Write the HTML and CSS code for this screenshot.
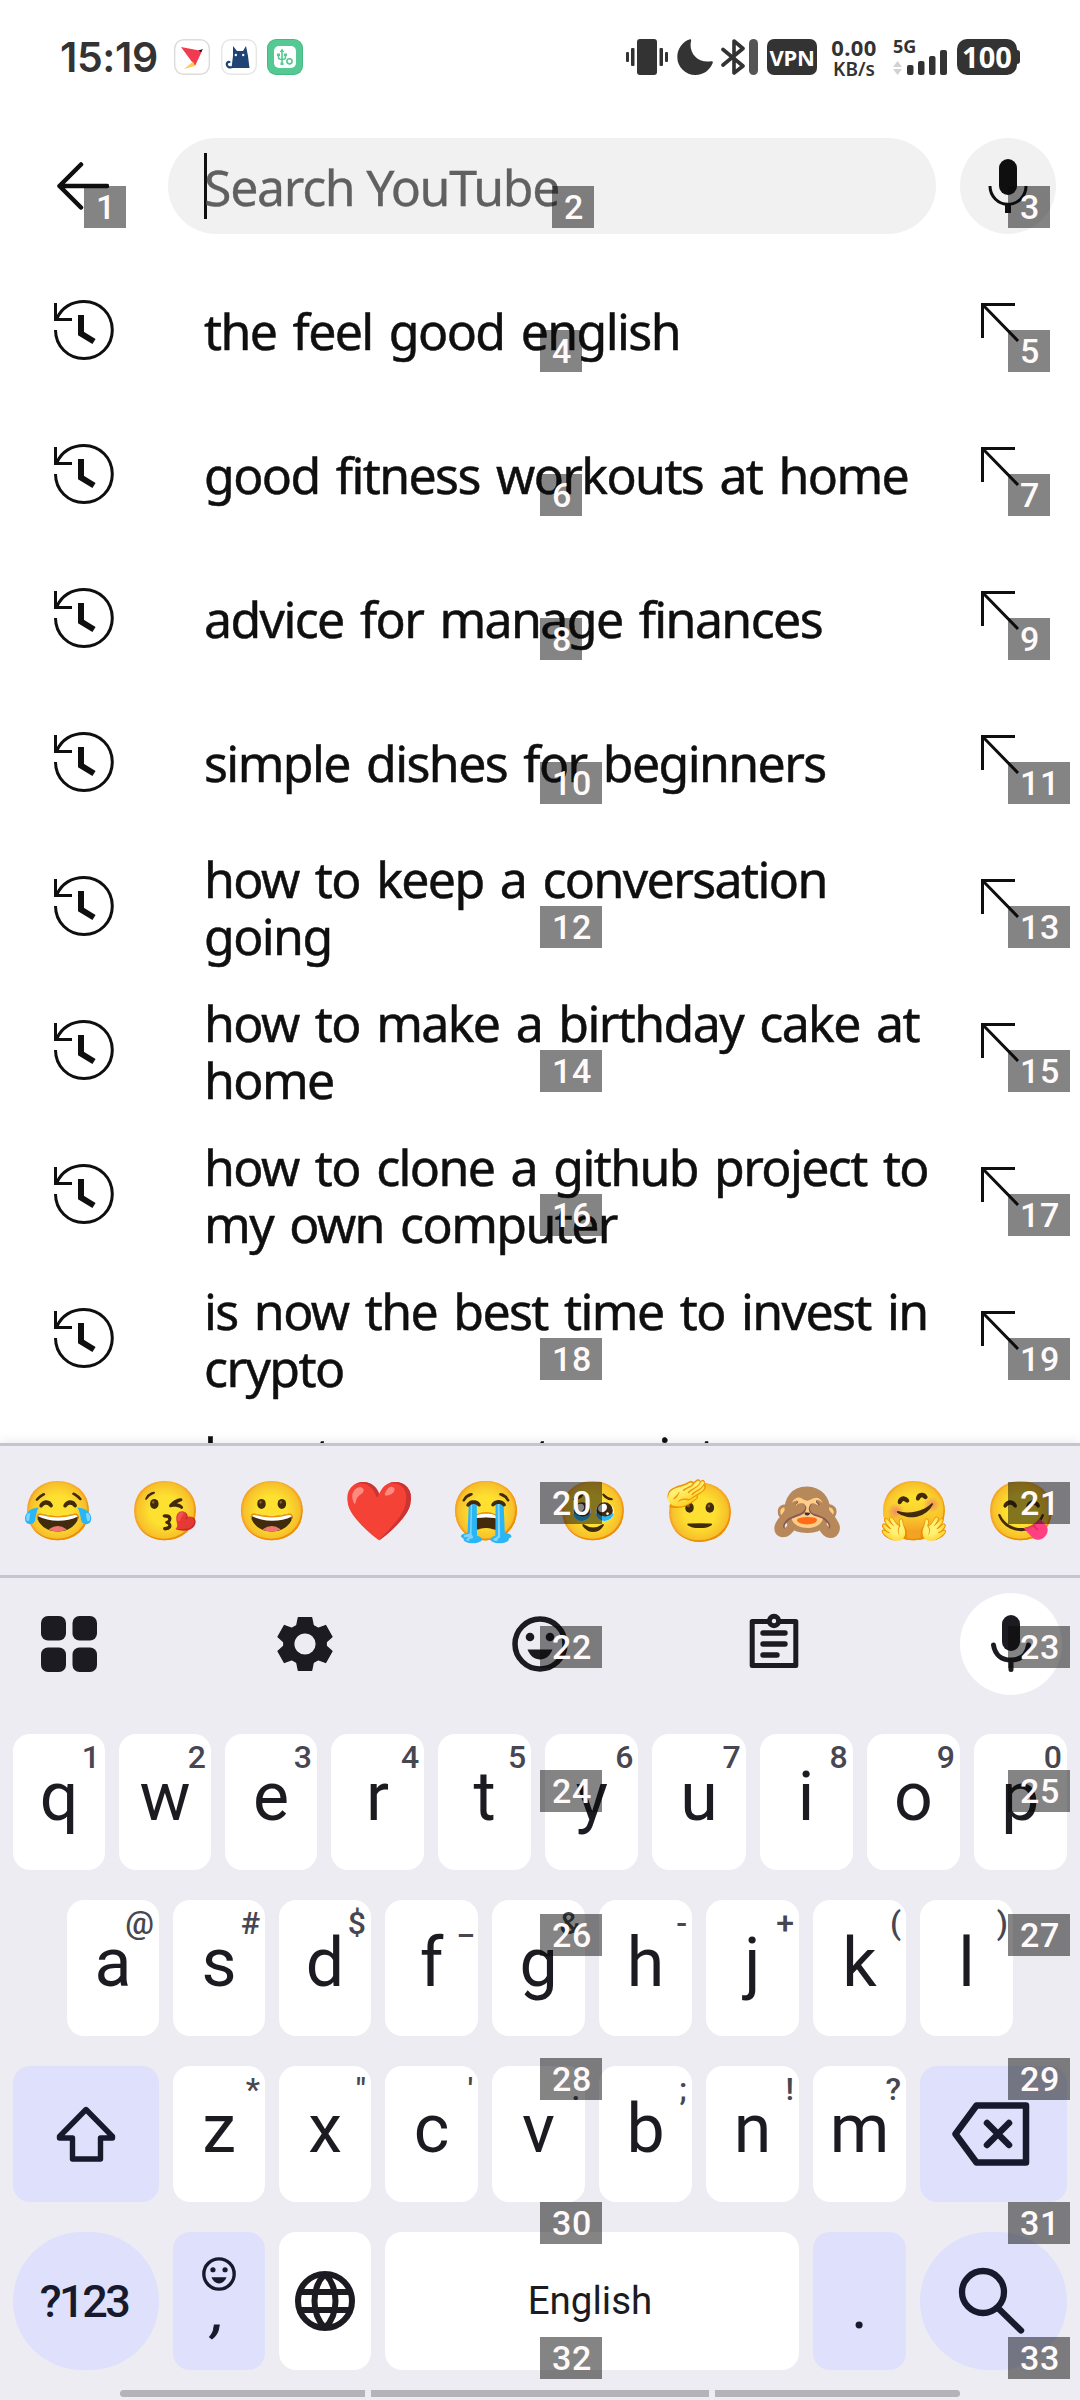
FILE: index.html
```html
<!DOCTYPE html>
<html lang="en">
<head>
<meta charset="utf-8">
<title>Search YouTube</title>
<link rel="stylesheet" href="styles.css">
</head>
<body>
<svg class="defs" aria-hidden="true">
  <symbol id="history" viewBox="0 0 64 64"><g fill="none" stroke="#0f0f0f"><path stroke-width="3" d="M3.5 32C3.5 48 16 60.500 32 60.500S60.300 48 60.300 32 48 3.500 32 3.500C20 3.500 9.500 9.500 5 20.500"/><path stroke-width="3" d="M3.500 5V21.500H20"/><path stroke-width="6" d="M29 17V35.500L42 43.500"/></g></symbol>
  <symbol id="insert" viewBox="0 0 42 42"><path fill="none" stroke="#0f0f0f" stroke-width="3" d="M2.500 36V2.500H35M2.500 2.500L38 39"/></symbol>
  <symbol id="smile" viewBox="0 0 56 56"><circle cx="28" cy="28" r="25" fill="none" stroke="currentColor" stroke-width="5.500"/><circle cx="18" cy="21" r="4.300" fill="currentColor"/><circle cx="38" cy="21" r="4.300" fill="currentColor"/><path fill="currentColor" d="M15.500 33.500H40.500C38 40 33.500 43.500 28 43.500S18 40 15.500 33.500Z"/></symbol>
</svg>

<header class="status">
  <span class="clock">15:19</span>
  <div class="apps">
    <svg width="36" height="36" viewBox="0 0 36 36"><rect x=".7" y=".7" width="34.600" height="34.600" rx="9" fill="#fff" stroke="#dcdcdc" stroke-width="1.400"/><path fill="#f23a50" d="M7 8L28 12 21 27Z"/><path fill="#ffcb57" d="M10 30L19 22.500 21 27Z"/><path fill="#111" d="M24.500 11.500L29 10 27 13Z"/></svg>
    <svg width="36" height="36" viewBox="0 0 36 36"><rect x=".7" y=".7" width="34.600" height="34.600" rx="9" fill="#fff" stroke="#e6e6e6" stroke-width="1.400"/><path fill="#1f4374" d="M12 7L16 12H22L25 7 27 17 28.500 29H10.500L12 17Z"/><path fill="none" stroke="#1f4374" stroke-width="2.200" stroke-linecap="round" d="M12 28C5 30 4 22.500 8.500 23"/><circle cx="14.800" cy="16" r="1.200" fill="#fff"/><circle cx="22.200" cy="16" r="1.200" fill="#fff"/></svg>
    <svg width="36" height="36" viewBox="0 0 36 36"><rect width="36" height="36" rx="9" fill="#46b983"/><rect x="1" y="1" width="34" height="34" rx="8" fill="#54c993"/><rect x="7" y="7" width="22" height="22" rx="5" fill="#fff"/><g fill="none" stroke="#54c993" stroke-width="1.600"><path d="M15 12V24.500M11.500 16V18.500Q11.500 20.500 15 20.500 18.500 20.500 18.500 18.500V16"/><circle cx="22.500" cy="22.300" r="2.600"/></g><path fill="#54c993" d="M15 9.500L17.300 13H12.700ZM13.500 23.500H16.500V26H13.500ZM10 14.500H13V17H10ZM17 14.500H20V17H17Z"/></svg>
  </div>
  <div class="indicators">
    <svg class="i-vib" width="42" height="36" viewBox="0 0 42 36" fill="#333"><rect x="11" width="20" height="36" rx="3"/><rect y="13" width="3" height="10" rx="1"/><rect x="5" y="9" width="3.500" height="18" rx="1"/><rect x="33.500" y="9" width="3.500" height="18" rx="1"/><rect x="39" y="13" width="3" height="10" rx="1"/></svg>
    <svg class="i-moon" width="36" height="36" viewBox="0 0 36 36" fill="#333"><path d="M13 .3C14.300 0 14.300 .8 14 2.500 11.500 13 20 24.500 34 22.300 35.600 22 36.100 22.500 35.700 24 33 31 26.500 36 18.500 36A18 18 0 0 1 .3 18C.3 10 5.500 2.500 13 .3Z"/></svg>
    <svg class="i-bt" width="38" height="36" viewBox="0 0 38 36"><path fill="none" stroke="#333" stroke-width="3.600" stroke-linejoin="round" stroke-linecap="round" d="M2 10.500L22 27 13 34V2L22 9.500 2 26"/><rect x="28" width="9" height="36" rx="4.500" fill="#555"/></svg>
    <span class="vpn">VPN</span>
    <div class="speed"><span class="rate">0.00</span><span class="unit">KB/s</span></div>
    <div class="cell"><span class="gen">5G</span>
      <svg width="55" height="27" viewBox="0 0 55 27"><path fill="#d2d2d2" d="M0 19H9L4.500 13ZM0 21H9L4.500 27Z"/><g fill="#333"><rect x="14" y="17" width="6.500" height="10" rx="2"/><rect x="25" y="13" width="6.500" height="14" rx="2"/><rect x="36" y="8" width="6.500" height="19" rx="2"/><rect x="47" y="2" width="7" height="25" rx="2"/></g></svg>
    </div>
    <span class="battery">100</span><i class="nub"></i>
  </div>
</header>

<div class="searchbar">
  <svg class="back" width="52" height="50" viewBox="0 0 52 50"><path fill="none" stroke="#0f0f0f" stroke-width="4.500" stroke-linecap="round" stroke-linejoin="round" d="M24 3.500L2.500 25 24 46.500M2.500 25H50"/></svg>
  <div class="field"><i class="caret"></i><span>Search YouTube</span></div>
  <div class="voice"><svg width="40" height="56" viewBox="0 0 40 56"><rect x="11" y="1" width="18" height="36" rx="9" fill="#0f0f0f"/><path fill="none" stroke="#0f0f0f" stroke-width="3" d="M2 28A18 18.300 0 0 0 38 28"/><path fill="#0f0f0f" d="M17 46H23V55H17Z"/></svg></div>
</div>

<main class="results">
  <div class="row"><svg class="hist"><use href="#history"/></svg><p>the feel good english</p><svg class="ins"><use href="#insert"/></svg></div>
  <div class="row"><svg class="hist"><use href="#history"/></svg><p>good fitness workouts at home</p><svg class="ins"><use href="#insert"/></svg></div>
  <div class="row"><svg class="hist"><use href="#history"/></svg><p>advice for manage finances</p><svg class="ins"><use href="#insert"/></svg></div>
  <div class="row"><svg class="hist"><use href="#history"/></svg><p>simple dishes for beginners</p><svg class="ins"><use href="#insert"/></svg></div>
  <div class="row"><svg class="hist"><use href="#history"/></svg><p>how to keep a conversation<br>going</p><svg class="ins"><use href="#insert"/></svg></div>
  <div class="row"><svg class="hist"><use href="#history"/></svg><p>how to make a birthday cake at<br>home</p><svg class="ins"><use href="#insert"/></svg></div>
  <div class="row"><svg class="hist"><use href="#history"/></svg><p>how to clone a github project to<br>my own computer</p><svg class="ins"><use href="#insert"/></svg></div>
  <div class="row"><svg class="hist"><use href="#history"/></svg><p>is now the best time to invest in<br>crypto</p><svg class="ins"><use href="#insert"/></svg></div>
  <div class="row"><span class="hist"></span><p>how to connect a printer<br>&nbsp;</p></div>
</main>

<section class="keyboard">
  <div class="emojis"><span>😂</span><span>😘</span><span>😀</span><span>❤️</span><span>😭</span><span>🥹</span><span>🫡</span><span>🙈</span><span>🤗</span><span>😋</span></div>
  <div class="tools">
    <span><svg width="56" height="56" viewBox="0 0 56 56" fill="#1b1b21"><rect width="25" height="24.500" rx="7"/><rect x="31.500" width="24.500" height="24.500" rx="7"/><rect y="31.500" width="25" height="24.500" rx="7"/><rect x="31.500" y="31.500" width="24.500" height="24.500" rx="7"/></svg></span>
    <span><svg width="66" height="66" viewBox="0 0 24 24"><path fill="#1b1b21" fill-rule="evenodd" stroke="#1b1b21" stroke-width=".5" stroke-linejoin="round" d="M9.600 2.400H14.400L15 5.300 16.800 6.300 19.500 5.300 21.800 9.400 19.700 11.300V12.700L21.800 14.600 19.500 18.700 16.800 17.700 15 18.700 14.400 21.600H9.600L9 18.700 7.200 17.700 4.500 18.700 2.200 14.600 4.300 12.700V11.300L2.200 9.400 4.500 5.300 7.200 6.300 9 5.300ZM12 7.900A4.100 4.100 0 1 0 12 16.100 4.100 4.100 0 1 0 12 7.900Z"/></svg></span>
    <span><svg width="56" height="56"><use href="#smile"/></svg></span>
    <span class="clip"><svg width="50" height="56" viewBox="0 0 50 56"><path fill="none" stroke="#1b1b21" stroke-width="5" stroke-linejoin="round" d="M3.200 8.500H46.800V52.500H3.200Z"/><circle cx="25" cy="8" r="4.700" fill="#edecf3" stroke="#1b1b21" stroke-width="5"/><path stroke="#1b1b21" stroke-width="5.400" stroke-linecap="round" d="M14 20H36M14 31H36M14 42H28"/></svg></span>
    <span class="mic"><svg width="44" height="60" viewBox="0 0 44 60"><rect x="13" y="1" width="18" height="36" rx="9" fill="#1b1b21"/><path fill="none" stroke="#1b1b21" stroke-width="5" stroke-linecap="round" d="M4.500 31C6 41 13 46 22 46S38 41 39.500 31M22 47V55.500"/></svg></span>
  </div>
  <div class="keys">
    <div class="krow"><b class="n">q<sup>1</sup></b><b class="n">w<sup>2</sup></b><b class="n">e<sup>3</sup></b><b>r<sup>4</sup></b><b>t<sup>5</sup></b><b>y<sup>6</sup></b><b>u<sup>7</sup></b><b>i<sup>8</sup></b><b>o<sup>9</sup></b><b>p<sup>0</sup></b></div>
    <div class="krow home"><b class="n">a<sup>@</sup></b><b class="n">s<sup>#</sup></b><b class="n">d<sup>$</sup></b><b>f<sup>_</sup></b><b>g<sup>&amp;</sup></b><b>h<sup>-</sup></b><b>j<sup>+</sup></b><b>k<sup>(</sup></b><b>l<sup>)</sup></b></div>
    <div class="krow">
      <b class="fn wide"><svg width="62" height="62" viewBox="0 0 62 62"><path fill="none" stroke="#171a2c" stroke-width="5.400" stroke-linejoin="round" d="M31 6.500L4.500 33.500V35H17.500V56H45.500V35H57.500V33.500Z"/></svg></b>
      <b class="n">z<sup>*</sup></b><b class="n">x<sup>"</sup></b><b>c<sup>'</sup></b><b>v<sup>:</sup></b><b>b<sup>;</sup></b><b>n<sup>!</sup></b><b>m<sup>?</sup></b>
      <b class="fn wide del"><svg width="78" height="64" viewBox="0 0 78 64"><g fill="none" stroke="#171a2c" stroke-width="6.500" stroke-linejoin="round" stroke-linecap="round"><path d="M24.500 3.500H74V60.500H24.500L3.500 32Z"/><path d="M35 21L57 43M57 21L35 43"/></g></svg></b>
    </div>
    <div class="krow last">
      <b class="fn wide round sym">?123</b>
      <b class="n fn comma"><svg width="34" height="34"><use href="#smile"/></svg><span>,</span></b>
      <b class="n globe"><svg width="60" height="60" viewBox="0 0 60 60"><g fill="none" stroke="#1b1b21" stroke-width="6"><circle cx="30" cy="30" r="27"/><path d="M3 21H57M3 39H57M30 3C16 17 16 43 30 57M30 3C44 17 44 43 30 57"/></g></svg></b>
      <b class="space">English</b>
      <b class="fn dot">.</b>
      <b class="fn wide round go"><svg width="68" height="70" viewBox="0 0 68 70"><g fill="none" stroke="#171a2c" stroke-width="6.300" stroke-linecap="round"><circle cx="26" cy="26" r="21"/><path d="M42 43L64 64.500"/></g></svg></b>
    </div>
  </div>
  <div class="nav"><i></i><i></i><i></i></div>
</section>

<div class="tags">
  <span style="left:84px;top:186px">1</span><span style="left:552px;top:186px">2</span><span style="left:1008px;top:186px">3</span>
  <span style="left:540px;top:330px">4</span><span style="left:1008px;top:330px">5</span>
  <span style="left:540px;top:474px">6</span><span style="left:1008px;top:474px">7</span>
  <span style="left:540px;top:618px">8</span><span style="left:1008px;top:618px">9</span>
  <span style="left:540px;top:762px">10</span><span style="left:1008px;top:762px">11</span>
  <span style="left:540px;top:906px">12</span><span style="left:1008px;top:906px">13</span>
  <span style="left:540px;top:1050px">14</span><span style="left:1008px;top:1050px">15</span>
  <span style="left:540px;top:1194px">16</span><span style="left:1008px;top:1194px">17</span>
  <span style="left:540px;top:1338px">18</span><span style="left:1008px;top:1338px">19</span>
  <span style="left:540px;top:1482px">20</span><span style="left:1008px;top:1482px">21</span>
  <span style="left:540px;top:1626px">22</span><span style="left:1008px;top:1626px">23</span>
  <span style="left:540px;top:1770px">24</span><span style="left:1008px;top:1770px">25</span>
  <span style="left:540px;top:1914px">26</span><span style="left:1008px;top:1914px">27</span>
  <span style="left:540px;top:2058px">28</span><span style="left:1008px;top:2058px">29</span>
  <span style="left:540px;top:2202px">30</span><span style="left:1008px;top:2202px">31</span>
  <span style="left:540px;top:2337px">32</span><span style="left:1008px;top:2337px">33</span>
</div>
</body>
</html>
```
FILE: styles.css
```css
* { box-sizing: border-box; }
body {
  margin: 0;
  width: 1080px;
  height: 2400px;
  position: relative;
  overflow: hidden;
  display: flex;
  flex-direction: column;
  background: #fff;
  color: #0f0f0f;
  font-family: "Noto Sans", sans-serif;
}
svg { display: block; flex: none; }
.defs { position: absolute; width: 0; height: 0; }

/* status bar */
.status { height: 138px; padding: 39px 60px 0 60px; display: flex; color: #333; }
.clock { width: 114px; height: 36px; font: 600 41px/36px Inter, sans-serif; letter-spacing: -.4px; }
.apps { display: flex; gap: 10.500px; }
.indicators { margin-left: auto; display: flex; height: 36px; }
.i-moon { margin-left: 9px; }
.i-bt { margin-left: 8px; }
.vpn {
  margin-left: 8px; width: 50px; height: 36px; border-radius: 7px; background: #333; color: #fff;
  font: 700 22px/36px "Noto Sans", sans-serif; text-align: center; letter-spacing: -.3px;
}
.speed { margin-left: 12px; width: 50px; display: flex; flex-direction: column; align-items: center; font-weight: 700; }
.rate { font-size: 22px; line-height: 17px; letter-spacing: .4px; }
.unit { font-size: 19px; line-height: 19px; margin-top: 3.500px; font-weight: 600; }
.cell { margin-left: 14px; width: 55px; height: 36px; display: flex; flex-direction: column; justify-content: space-between; }
.cell svg { margin-top: -5px; }
.gen { font-size: 18px; line-height: 14px; font-weight: 700; }
.battery {
  margin-left: 9px; width: 60px; height: 36px; border-radius: 10px; background: #333; color: #fff;
  font: 700 29px/36px "Noto Sans", sans-serif; text-align: center;
}
.nub { width: 3px; height: 14px; margin-top: 11px; border-radius: 0 3px 3px 0; background: #333; }

/* search bar */
.searchbar { height: 120px; padding: 0 24px 24px 57px; display: flex; align-items: center; }
.field {
  margin-left: 59px; width: 768px; height: 96px; padding-left: 36px; border-radius: 48px; background: #f1f1f1;
  display: flex; align-items: center; color: #606060; font-size: 50px; letter-spacing: -1.300px;
}
.field span { padding-top: 2px; -webkit-text-stroke: .3px #606060; }
.caret { width: 3px; height: 66px; margin-right: -3px; background: #0f0f0f; }
.voice { margin-left: auto; width: 96px; height: 96px; border-radius: 50%; background: #f1f1f1; display: flex; align-items: center; justify-content: center; }

/* suggestions */
.results { height: 1185px; overflow: hidden; }
.row { height: 144px; padding-left: 52px; display: flex; align-items: center; }
.hist { width: 64px; height: 64px; flex: none; }
.row p {
  margin: 0 0 0 88px; padding-top: 3px; width: 776px; flex: none; white-space: nowrap;
  font-size: 50px; line-height: 57px; letter-spacing: -1.600px; word-spacing: 4.800px; -webkit-text-stroke: .5px #0f0f0f;
}
.ins { width: 42px; height: 42px; margin-top: -14px; }

/* keyboard */
.keyboard {
  position: relative; height: 957px; background: #edecf3; color: #1b1b21;
  font-family: Roboto, sans-serif; display: flex; flex-direction: column;
  box-shadow: 0 -2px 10px rgba(0, 0, 0, .08);
}
.emojis {
  height: 135px; padding: 0 6px 0 4px; display: grid; grid-template-columns: repeat(10, 1fr); align-items: center; justify-items: center;
  border-top: 3px solid #c6c4d0; border-bottom: 3px solid #c6c4d0; font-size: 58px; line-height: 70px;
}
.tools { height: 156px; padding: 15px 18px 39px; display: flex; justify-content: space-between; }
.tools span { width: 102px; height: 102px; display: flex; align-items: center; justify-content: center; }
.tools .clip { padding: 0 3px 7px 0; }
.tools .mic { border-radius: 50%; background: #fff; }
.keys { padding: 0 13px; display: flex; flex-direction: column; gap: 30px; }
.krow { height: 136px; display: flex; gap: 14px; }
.krow.home { padding: 0 54px; }
.krow.last { height: 138px; }
.krow b {
  position: relative; flex: 1 1 0; min-width: 0; padding-bottom: 10px; border-radius: 17px; background: #fff;
  display: flex; align-items: center; justify-content: center; font-weight: 400; font-size: 68px; line-height: 1;
}
.krow .n { flex: 0 0 92px; }
.krow sup { position: absolute; top: 7px; right: 5px; font-size: 32px; line-height: 32px; font-weight: 500; color: #474651; }
.krow .fn { background: #dfe0fb; color: #171a2c; }
.krow .wide { flex: 0 0 146px; padding-bottom: 0; }
.krow .del, .krow .go { flex-basis: 147px; padding-right: 5px; }
.krow .round { border-radius: 69px; }
.krow .sym { font-size: 45px; font-weight: 500; letter-spacing: -2.500px; padding-right: 4px; }
.krow .comma { flex-direction: column; justify-content: flex-start; padding: 25px 0 0; }
.comma span { font-size: 56px; line-height: 56px; margin-top: -7px; transform: skewX(-10deg); -webkit-text-stroke: 1px #171a2c; }
.krow .globe { padding: 0; }
.krow .space { flex: 0 0 414px; padding: 0 4px 0 0; font-size: 38.500px; }
.krow .dot { font-size: 64px; padding: 11px 0 0; }
.nav { margin-top: 20px; padding-left: 120px; display: flex; gap: 6px; }
.nav i { width: 245px; height: 7px; background: #b4b3b9; }
.nav i:nth-child(2) { width: 338px; }
.nav i:first-child { border-radius: 4px 0 0 4px; }
.nav i:last-child { border-radius: 0 4px 4px 0; }

/* numbered tags laid over the screen */
.tags span {
  position: absolute; height: 42px; padding: 0 10px 0 12px; background: rgba(10, 10, 10, .5); color: #fffafa;
  font: 500 34px/43px Roboto, sans-serif; letter-spacing: .6px;
}
```
